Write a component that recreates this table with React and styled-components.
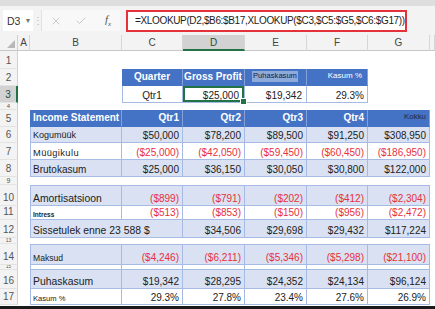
import React from "react";
import styled, { createGlobalStyle } from "styled-components";
import { X, Check } from "lucide-react";

const GlobalStyle = createGlobalStyle`
  html, body {
    margin: 0;
    padding: 0;
    background: #fff;
  }
  body {
    font-family: "Liberation Sans", Arial, sans-serif;
    overflow: hidden;
  }
`;

const COLS = "18px 12px 92px 61px 62px 62px 61px 62px 1fr";
const BLUE = "#4472c4";
const BAND = "#d9e1f2";
const LINE = "#a6bbe3";
const GREEN = "#217346";

const Window = styled.div`
  width: 435px;
  height: 309px;
  box-sizing: border-box;
  border-bottom: 3px solid #1a1a1a;
  display: flex;
  flex-direction: column;
  overflow: hidden;
  background: #fff;
`;

const FormulaBar = styled.div`
  height: 35px;
  box-sizing: border-box;
  border-top: 6px solid #dedede;
  background: #f3f3f3;
  display: flex;
  align-items: center;
  padding-left: 3px;
`;

const NameBox = styled.div`
  width: 30px;
  height: 21px;
  box-sizing: border-box;
  background: #fff;
  display: flex;
  align-items: center;
  padding-left: 4px;
  gap: 4px;
  font-size: 10.5px;
  color: #333;
`;

const Caret = styled.span`
  font-size: 7px;
  color: #777;
`;

const Grip = styled.div`
  width: 8px;
  text-align: center;
  font-size: 10px;
  color: #bbb;
`;

const IconGroup = styled.div`
  width: 79px;
  height: 21px;
  margin-right: 6px;
  display: grid;
  grid-template-columns: 28px 22px 1fr;
  align-items: center;
  background: #f8f8f8;
  border-left: 1px solid #e2e2e2;
  box-sizing: border-box;
`;

const IconSlot = styled.div`
  display: flex;
  justify-content: ${(p) => (p.$start ? "flex-start" : "center")};
  padding-left: ${(p) => p.$pad || 0}px;
  color: #b3b3b3;
`;

const Fx = styled.span`
  font-family: "Liberation Serif", serif;
  font-style: italic;
  font-size: 11px;
  color: #555;
  sub {
    font-size: 7px;
  }
`;

const FormulaInput = styled.div`
  width: 281px;
  height: 22px;
  box-sizing: border-box;
  border: 2px solid #e5313a;
  background: #fff;
  display: flex;
  align-items: center;
  padding-left: 7px;
  font-size: 10px;
  letter-spacing: -0.35px;
  color: #222;
  white-space: nowrap;
`;

const Sheet = styled.div`
  display: flex;
  flex-direction: column;
`;

const Row = styled.div`
  display: grid;
  grid-template-columns: ${COLS};
  height: ${(p) => p.$h}px;
`;

const Corner = styled.div`
  background: #f3f3f3;
  border-right: 1px solid #d0d0d0;
  border-bottom: 1px solid #c8c8c8;
  box-sizing: border-box;
  display: flex;
  align-items: flex-end;
  justify-content: flex-end;
  padding: 0 2px 2px 0;
`;

const ColHead = styled.div`
  box-sizing: border-box;
  background: ${(p) => (p.$active ? "#d2d2d2" : "#f3f3f3")};
  border-right: 1px solid #d6d6d6;
  border-bottom: ${(p) => (p.$active ? `2px solid ${GREEN}` : "1px solid #c8c8c8")};
  display: flex;
  align-items: center;
  justify-content: center;
  font-size: 10px;
  color: ${(p) => (p.$active ? "#1f4e33" : "#444")};
`;

const RowNum = styled.div`
  box-sizing: border-box;
  background: ${(p) => (p.$active ? "#d2d2d2" : "#f3f3f3")};
  border-right: ${(p) => (p.$active ? `2px solid ${GREEN}` : "1px solid #d0d0d0")};
  border-bottom: 1px solid #e3e3e3;
  display: flex;
  align-items: flex-end;
  justify-content: center;
  padding-bottom: ${(p) => (p.$fs ? 0 : 2)}px;
  overflow: hidden;
  font-size: ${(p) => p.$fs || 10}px;
  line-height: ${(p) => (p.$fs ? p.$fs : 11)}px;
  color: ${(p) => (p.$active ? "#1f4e33" : "#555")};
`;

const Blank = styled.div`
  grid-column: span ${(p) => p.$span || 1};
`;

const tones = { head: BLUE, band: BAND, plain: "#fff" };

const Cell = styled.div`
  position: relative;
  box-sizing: border-box;
  grid-column: span ${(p) => p.$span || 1};
  display: flex;
  align-items: ${(p) => (p.$mid ? "center" : "flex-end")};
  justify-content: ${(p) =>
    p.$align === "left" ? "flex-start" : p.$align === "center" ? "center" : "flex-end"};
  padding: 0 ${(p) => p.$pr ?? 3}px 1px 2px;
  background: ${(p) => tones[p.$tone || "plain"]};
  color: ${(p) => (p.$red ? "#e8303a" : p.$tone === "head" ? "#fff" : "#222")};
  font-size: ${(p) => p.$fs || 10}px;
  font-weight: ${(p) => (p.$bold ? 700 : 400)};
  letter-spacing: ${(p) => p.$ls || 0}px;
  line-height: 1.1;
  white-space: nowrap;
  overflow: ${(p) => (p.$selected ? "visible" : "hidden")};
  border-right: 1px solid ${(p) => (p.$tone === "head" ? "#86a1d8" : LINE)};
  border-bottom: 1px solid ${(p) => (p.$tone === "head" ? BLUE : LINE)};
  border-left: ${(p) => (p.$first ? `1px solid ${p.$tone === "head" ? BLUE : LINE}` : "none")};
  border-top: ${(p) => (p.$top ? `1px solid ${LINE}` : "none")};
  box-shadow: ${(p) => (p.$selected ? `inset 0 0 0 2px ${GREEN}` : "none")};
`;

const Handle = styled.span`
  position: absolute;
  right: -3px;
  bottom: -3px;
  width: 5px;
  height: 5px;
  background: ${GREEN};
  border: 1px solid #fff;
  z-index: 2;
`;

const Tag = styled.span`
  background: #8eaadb;
  color: #14213d;
  padding: 1px 1px;
  font-size: ${(p) => p.$fs}px;
`;

const SmallHead = styled.span`
  font-size: ${(p) => p.$fs}px;
  color: ${(p) => (p.$dark ? "#1b2a4a" : "#fff")};
  font-weight: 400;
`;

const letters = ["A", "B", "C", "D", "E", "F", "G", ""];

const income = [
  { n: 6, h: 16, label: "Kogumüük", fs: 9, tone: "band", vals: ["$50,000", "$78,200", "$89,500", "$91,250", "$308,950"] },
  { n: 7, h: 17, label: "Müügikulu", fs: 9.3, ls: 0.4, tone: "plain", red: true, vals: ["($25,000)", "($42,050)", "($59,450)", "($60,450)", "($186,950)"] },
  { n: 8, h: 17, label: "Brutokasum", fs: 10, tone: "band", vals: ["$25,000", "$36,150", "$30,050", "$30,800", "$122,000"] },
  { n: 9, h: 8, gap: true, nfs: 7 },
  { n: 10, h: 21, label: "Amortisatsioon", fs: 10.4, tone: "band", red: true, top: true, vals: ["($899)", "($791)", "($202)", "($412)", "($2,304)"] },
  { n: 11, h: 14, label: "Intress", fs: 6.5, bold: true, tone: "plain", red: true, vals: ["($513)", "($853)", "($150)", "($956)", "($2,472)"] },
  { n: 12, h: 18, label: "Sissetulek enne 23 588 $", fs: 10.4, span: 2, tone: "band", vals: ["$34,506", "$29,698", "$29,432", "$117,224"] },
  { n: 13, h: 6, gap: true, nfs: 5 },
  { n: 14, h: 21, label: "Maksud", fs: 8.6, tone: "band", red: true, top: true, vals: ["($4,246)", "($6,211)", "($5,346)", "($5,298)", "($21,100)"] },
  { n: 15, h: 5, nfs: 4.5, label: "", tone: "plain", vals: ["", "", "", "", ""] },
  { n: 16, h: 19, label: "Puhaskasum", fs: 10.4, tone: "band", vals: ["$19,342", "$28,295", "$24,352", "$24,134", "$96,124"] },
  { n: 17, h: 16, label: "Kasum %", fs: 7.6, tone: "plain", vals: ["29.3%", "27.8%", "23.4%", "27.6%", "26.9%"] },
];

const App = () => {
  return (
    <Window>
      <GlobalStyle />
      <FormulaBar>
        <NameBox>
          D3 <Caret>▼</Caret>
        </NameBox>
        <Grip>⋮</Grip>
        <IconGroup>
          <IconSlot>
            <X size={12} strokeWidth={1.4} />
          </IconSlot>
          <IconSlot>
            <Check size={12} strokeWidth={1.4} />
          </IconSlot>
          <IconSlot $start $pad={13}>
            <Fx>
              f<sub>x</sub>
            </Fx>
          </IconSlot>
        </IconGroup>
        <FormulaInput>=XLOOKUP(D2,$B6:$B17,XLOOKUP($C3,$C5:$G5,$C6:$G17))</FormulaInput>
      </FormulaBar>

      <Sheet>
        <Row $h={16}>
          <Corner>
            <svg width="8" height="8" viewBox="0 0 8 8">
              <polygon points="8,0 8,8 0,8" fill="#b8b8b8" />
            </svg>
          </Corner>
          {letters.map((l, i) => (
            <ColHead key={i} $active={l === "D"}>
              {l}
            </ColHead>
          ))}
        </Row>

        <Row $h={18}>
          <RowNum>1</RowNum>
        </Row>

        <Row $h={17}>
          <RowNum>2</RowNum>
          <Blank $span={2} />
          <Cell $tone="head" $first $bold $align="center" $mid>
            Quarter
          </Cell>
          <Cell $tone="head" $bold $align="center" $mid>
            Gross Profit
          </Cell>
          <Cell $tone="head" $align="center" $mid>
            <Tag $fs={7.6}>Puhaskasum</Tag>
          </Cell>
          <Cell $tone="head" $mid $pr={5}>
            <SmallHead $fs={8}>Kasum %</SmallHead>
          </Cell>
        </Row>

        <Row $h={17}>
          <RowNum $active>3</RowNum>
          <Blank $span={2} />
          <Cell $first $align="center">
            Qtr1
          </Cell>
          <Cell $selected $pr={5}>
            $25,000
            <Handle />
          </Cell>
          <Cell $pr={4}>$19,342</Cell>
          <Cell>29.3%</Cell>
        </Row>

        <Row $h={7}>
          <RowNum $fs={6}>4</RowNum>
        </Row>

        <Row $h={17}>
          <RowNum>5</RowNum>
          <Blank />
          <Cell $tone="head" $first $bold $align="left" $mid>
            Income Statement
          </Cell>
          {["Qtr1", "Qtr2", "Qtr3", "Qtr4"].map((q) => (
            <Cell key={q} $tone="head" $bold $mid>
              {q}
            </Cell>
          ))}
          <Cell $tone="head" $mid>
            <SmallHead $fs={7.9} $dark>
              Kokku
            </SmallHead>
          </Cell>
        </Row>

        {income.map((r) =>
          r.gap ? (
            <Row key={r.n} $h={r.h}>
              <RowNum $fs={r.nfs}>{r.n}</RowNum>
            </Row>
          ) : (
            <Row key={r.n} $h={r.h}>
              <RowNum $fs={r.nfs}>{r.n}</RowNum>
              <Blank />
              <Cell
                $first
                $top={r.top}
                $tone={r.tone}
                $align="left"
                $span={r.span}
                $fs={r.fs}
                $ls={r.ls}
                $bold={r.bold}
              >
                {r.label}
              </Cell>
              {r.vals.map((v, i) => (
                <Cell key={i} $top={r.top} $tone={r.tone} $red={r.red}>
                  {v}
                </Cell>
              ))}
            </Row>
          )
        )}
      </Sheet>
    </Window>
  );
};

export default App;
